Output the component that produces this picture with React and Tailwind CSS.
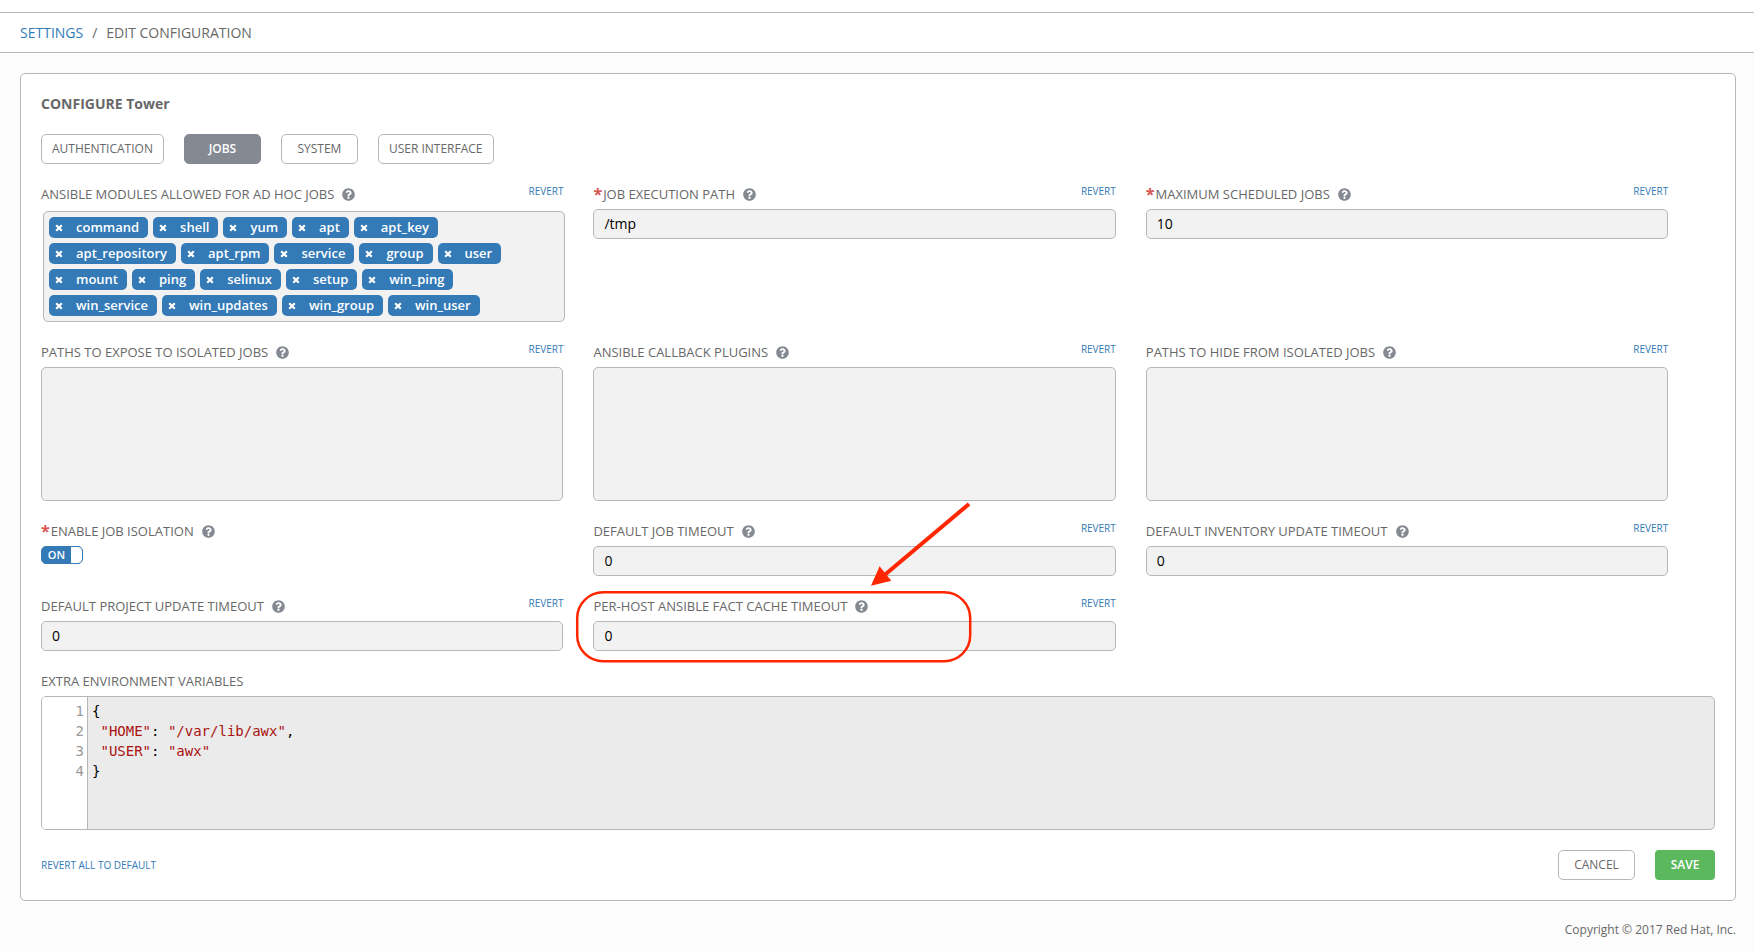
import React, { useState } from 'react';
import { FaQuestionCircle } from 'react-icons/fa';

const TABS = ['AUTHENTICATION', 'JOBS', 'SYSTEM', 'USER INTERFACE'];

const MODULES = [
  'command', 'shell', 'yum', 'apt', 'apt_key',
  'apt_repository', 'apt_rpm', 'service', 'group', 'user',
  'mount', 'ping', 'selinux', 'setup', 'win_ping',
  'win_service', 'win_updates', 'win_group', 'win_user',
];

// label row + control, one third of the form
const Field = ({ id, label, required, revert = true, note, children }) => (
  <div className="relative w-[33%] pr-[30px] mb-5">
    <div className="flex items-start justify-between mb-[5px]">
      <div className="flex items-center text-[13px] leading-5">
        {required && <span className="text-[#d9534f] text-base font-bold leading-5 mr-px">*</span>}
        {id ? <label htmlFor={id}>{label}</label> : <span>{label}</span>}
        <button type="button" aria-label={`Help for ${label}`} className="ml-2 text-[#848992]">
          <FaQuestionCircle className="w-[13px] h-[13px]" />
        </button>
      </div>
      {revert && (
        <button type="button" className="text-[10px] leading-[15px] text-[#337ab7]">REVERT</button>
      )}
    </div>
    {children}
    {note}
  </div>
);

const TextField = ({ id, value, ...rest }) => (
  <Field id={id} {...rest}>
    <input
      id={id}
      type="text"
      defaultValue={value}
      className="block w-full h-[30px] px-2.5 pb-0.5 rounded-[5px] border border-[#b7b7b7] bg-[#f2f2f2] text-black outline-none"
    />
  </Field>
);

const AreaField = ({ id, ...rest }) => (
  <Field id={id} {...rest}>
    <textarea
      id={id}
      className="block w-full h-[134px] px-2.5 py-1 rounded-[5px] border border-[#b7b7b7] bg-[#f2f2f2] text-black outline-none resize-none"
    />
  </Field>
);

const Tags = () => {
  const [modules, setModules] = useState(MODULES);

  return (
    <ul className="flex flex-wrap gap-[5px] mt-[7px] ml-0.5 -mr-0.5 p-[5px] rounded-[5px] border border-[#b7b7b7] bg-[#f2f2f2]">
      {modules.map((name) => (
        <li key={name} className="flex items-center h-[21px] pl-[5px] pr-[9px] rounded-[5px] bg-[#337ab7] text-white text-[13px] font-semibold">
          <button
            type="button"
            aria-label={`Remove ${name}`}
            onClick={() => setModules(modules.filter((m) => m !== name))}
            className="flex w-[22px] pl-px"
          >
            <svg viewBox="0 0 8 8" className="w-2 h-2" stroke="currentColor" strokeWidth="2.2">
              <path d="M1.2 1.2l5.6 5.6M6.8 1.2L1.2 6.8" />
            </svg>
          </button>
          {name}
        </li>
      ))}
    </ul>
  );
};

// red outline and arrow pointing at the fact cache field
const Callout = () => (
  <svg className="absolute -top-[100px] -left-[18px] w-[400px] h-[170px] pointer-events-none" viewBox="0 0 400 170" fill="none">
    <rect x="2.2" y="96.2" width="393" height="69" rx="26" stroke="#ff2600" strokeWidth="2.5" />
    <path d="M394 8L309 79.5" stroke="#ff2600" strokeWidth="4" />
    <path d="M296 89.7L304.6 70.3L316.3 84.7Z" fill="#ff2600" />
  </svg>
);

const CodeLine = ({ name, value, comma }) => (
  <>
    {' '}<span className="text-[#aa1111]">"{name}"</span>: <span className="text-[#aa1111]">"{value}"</span>{comma}{'\n'}
  </>
);

const App = () => {
  const [tab, setTab] = useState('JOBS');
  const [isolation, setIsolation] = useState(true);

  return (
    <div className="min-h-screen bg-[#fcfcfc] font-['Open_Sans',sans-serif] text-sm text-[#686868]">
      {/* Breadcrumb */}
      <header className="bg-white pt-3">
        <nav className="flex h-[41px] items-center border-y border-[#b7b7b7] px-5 leading-5">
          <a href="#settings" className="text-[#337ab7]">SETTINGS</a>
          <span className="mx-[9px]">/</span>
          <span>EDIT CONFIGURATION</span>
        </nav>
      </header>

      <main className="ml-5 mr-[18px] mt-5 rounded-[5px] border border-[#b7b7b7] bg-white p-5">
        <h1 className="text-sm leading-5 font-bold">CONFIGURE Tower</h1>

        {/* Tabs */}
        <div className="flex gap-5 my-5">
          {TABS.map((name) => (
            <button
              key={name}
              type="button"
              onClick={() => setTab(name)}
              className={`h-[30px] min-w-[77px] px-2.5 rounded-[5px] border text-xs ${
                tab === name ? 'border-[#848992] bg-[#848992] text-white font-semibold' : 'border-[#b7b7b7] bg-white'
              }`}
            >
              {name}
            </button>
          ))}
        </div>

        <form onSubmit={(e) => e.preventDefault()}>
          <div className="flex flex-wrap">
            <Field label="ANSIBLE MODULES ALLOWED FOR AD HOC JOBS">
              <Tags />
            </Field>
            <TextField id="job-path" label="JOB EXECUTION PATH" value="/tmp" required />
            <TextField id="max-jobs" label="MAXIMUM SCHEDULED JOBS" value="10" required />
            <AreaField id="expose-paths" label="PATHS TO EXPOSE TO ISOLATED JOBS" />
            <AreaField id="callback-plugins" label="ANSIBLE CALLBACK PLUGINS" />
            <AreaField id="hide-paths" label="PATHS TO HIDE FROM ISOLATED JOBS" />
            <Field id="isolation" label="ENABLE JOB ISOLATION" required revert={false}>
              <div className="flex w-[42px] h-[18px] rounded-[5px] border border-[#337ab7] bg-[#337ab7] overflow-hidden">
                <span className="flex-1 text-center text-[11px] leading-4 font-semibold text-white">{isolation ? 'ON' : 'OFF'}</span>
                <input
                  id="isolation"
                  type="checkbox"
                  checked={isolation}
                  onChange={(e) => setIsolation(e.target.checked)}
                  className="appearance-none w-[11px] h-4 rounded-r-[4px] bg-white"
                />
              </div>
            </Field>
            <TextField id="job-timeout" label="DEFAULT JOB TIMEOUT" value="0" />
            <TextField id="inventory-timeout" label="DEFAULT INVENTORY UPDATE TIMEOUT" value="0" />
            <TextField id="project-timeout" label="DEFAULT PROJECT UPDATE TIMEOUT" value="0" />
            <TextField id="fact-timeout" label="PER-HOST ANSIBLE FACT CACHE TIMEOUT" value="0" note={<Callout />} />
          </div>

          {/* Extra variables editor */}
          <h2 className="text-[13px] leading-5 mb-[5px]">EXTRA ENVIRONMENT VARIABLES</h2>
          <div className="flex h-[134px] rounded-[5px] border border-[#b7b7b7] bg-[#ebebeb] overflow-hidden font-['DejaVu_Sans_Mono',monospace] leading-5">
            <pre className="w-[46px] shrink-0 pt-1 pr-[3px] border-r border-[#b7b7b7] bg-white text-right text-[#999999] font-[inherit]">{'1\n2\n3\n4'}</pre>
            <pre className="flex-1 pt-1 pl-1 text-black font-[inherit]">
              {'{\n'}
              <CodeLine name="HOME" value="/var/lib/awx" comma="," />
              <CodeLine name="USER" value="awx" />
              {'}'}
            </pre>
          </div>

          {/* Actions */}
          <div className="flex items-center mt-5">
            <button type="button" className="text-[10px] text-[#337ab7]">REVERT ALL TO DEFAULT</button>
            <button type="button" className="ml-auto h-[30px] min-w-[77px] px-2.5 rounded-[5px] border border-[#b7b7b7] bg-white text-xs">CANCEL</button>
            <button type="submit" className="ml-5 h-[30px] min-w-[60px] px-2.5 rounded-[4px] bg-[#5cb85c] text-xs font-semibold text-white">SAVE</button>
          </div>
        </form>
      </main>

      <footer className="pt-5 pr-[18px] text-right text-xs leading-[18px]">Copyright © 2017 Red Hat, Inc.</footer>
    </div>
  );
};

export default App;
